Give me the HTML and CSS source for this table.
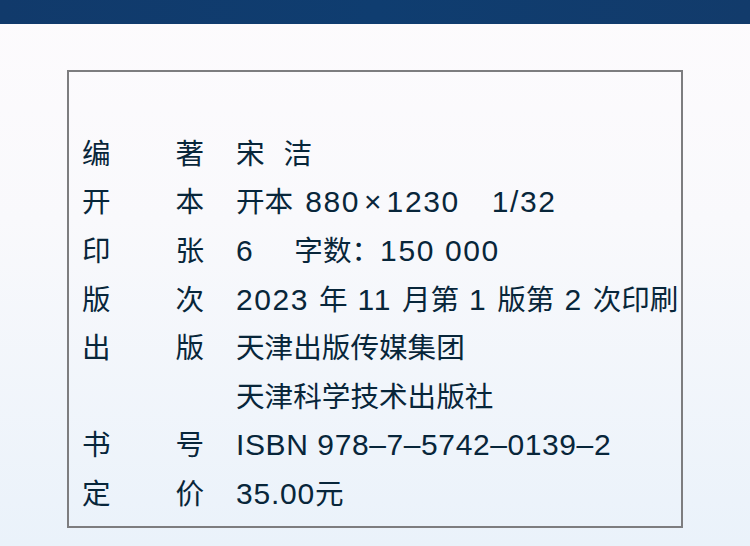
FILE: index.html
```html
<!DOCTYPE html>
<html lang="zh-CN">
<head>
<meta charset="utf-8">
<title>版权页</title>
<link rel="stylesheet" href="styles.css">
</head>
<body>
<div class="band"></div>
<main class="page">
  <section class="info">
    <div class="row"><div class="label"><span>编</span><span>著</span></div><div class="value">宋<span class="gap"></span>洁</div></div>
    <div class="row"><div class="label"><span>开</span><span>本</span></div><div class="value">开本<span class="sp"></span><span class="num">880</span><span class="times">×</span><span class="num">1230</span><span class="wide"></span><span class="num">1/32</span></div></div>
    <div class="row"><div class="label"><span>印</span><span>张</span></div><div class="value"><span class="num">6</span><span class="wide2"></span>字数：<span class="num">150 000</span></div></div>
    <div class="row"><div class="label"><span>版</span><span>次</span></div><div class="value"><span class="num">2023 </span>年<span class="num"> 11 </span>月第<span class="num"> 1 </span>版第<span class="num"> 2 </span>次印刷</div></div>
    <div class="row"><div class="label"><span>出</span><span>版</span></div><div class="value">天津出版传媒集团</div></div>
    <div class="row"><div class="label"></div><div class="value">天津科学技术出版社</div></div>
    <div class="row"><div class="label"><span>书</span><span>号</span></div><div class="value"><span class="num isbn">ISBN 978–7–5742–0139–2</span></div></div>
    <div class="row"><div class="label"><span>定</span><span>价</span></div><div class="value"><span class="num price">35.00</span>元</div></div>
  </section>
</main>
</body>
</html>
```
FILE: styles.css
```css
html, body {
  margin: 0;
  padding: 0;
}
body {
  width: 750px;
  height: 546px;
  overflow: hidden;
  background: linear-gradient(180deg, #fdfbfd 0%, #f9f9fc 40%, #eaf2fa 100%);
  font-family: "Liberation Sans", "Noto Sans CJK SC", sans-serif;
  color: #08263a;
}
.band {
  height: 24px;
  background: linear-gradient(90deg, #113a6b 0%, #0f3d70 50%, #123b6b 100%);
}
.page {
  padding: 46px 0 0 67px;
}
.info {
  width: 599px;
  border: 2px solid #7d7d7f;
  padding: 55px 0 10px 13px;
}
.row {
  display: flex;
  height: 48.6px;
  align-items: center;
  font-size: 28.6px;
  white-space: nowrap;
}
.label {
  width: 122px;
  display: flex;
  justify-content: space-between;
  flex: none;
  font-family: "Noto Sans CJK SC", sans-serif;
}
.value {
  margin-left: 32px;
  font-family: "Noto Sans CJK SC", sans-serif;
}
.num {
  font-family: "Liberation Sans", sans-serif;
  font-size: 30px;
  letter-spacing: 1.6px;
}
.isbn {
  letter-spacing: 0.6px;
}
.price {
  letter-spacing: 0.8px;
}
.times {
  font-family: "Liberation Sans", sans-serif;
  font-size: 30px;
  margin: 0 5px 0 4px;
}
.sp { display: inline-block; width: 12px; }
.gap { display: inline-block; width: 19px; }
.wide { display: inline-block; width: 32px; }
.wide2 { display: inline-block; width: 40px; }
```
